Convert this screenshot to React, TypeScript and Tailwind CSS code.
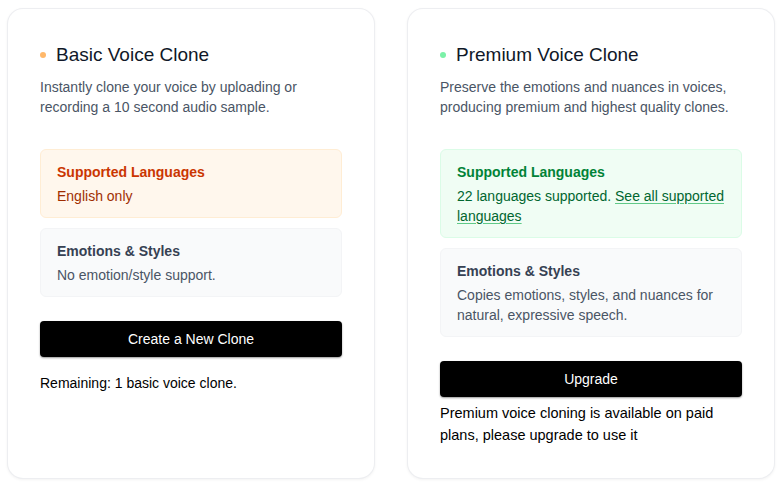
type InfoBox = {
  title: string;
  body: React.ReactNode;
  tone: "orange" | "green" | "gray";
};

type CloneCard = {
  title: string;
  dot: string;
  description: string;
  boxes: InfoBox[];
  action: string;
  footnote: string;
  footClass: string;
};

const TONE: Record<InfoBox["tone"], { box: string; title: string; body: string }> = {
  orange: {
    box: "bg-orange-50 border-orange-100",
    title: "text-orange-700",
    body: "text-orange-800",
  },
  green: {
    box: "bg-green-50 border-green-100",
    title: "text-green-700",
    body: "text-green-800",
  },
  gray: {
    box: "bg-gray-50 border-gray-100",
    title: "text-gray-700",
    body: "text-gray-600",
  },
};

const CARDS: CloneCard[] = [
  {
    title: "Basic Voice Clone",
    dot: "bg-orange-300",
    description: "Instantly clone your voice by uploading or recording a 10 second audio sample.",
    boxes: [
      { title: "Supported Languages", body: "English only", tone: "orange" },
      { title: "Emotions & Styles", body: "No emotion/style support.", tone: "gray" },
    ],
    action: "Create a New Clone",
    footnote: "Remaining: 1 basic voice clone.",
    footClass: "mt-4 text-sm leading-5",
  },
  {
    title: "Premium Voice Clone",
    dot: "bg-green-300",
    description: "Preserve the emotions and nuances in voices, producing premium and highest quality clones.",
    boxes: [
      {
        title: "Supported Languages",
        body: (
          <>
            22 languages supported.{" "}
            <a href="#" className="underline decoration-green-600/60 underline-offset-2">
              See all supported languages
            </a>
          </>
        ),
        tone: "green",
      },
      {
        title: "Emotions & Styles",
        body: "Copies emotions, styles, and nuances for natural, expressive speech.",
        tone: "gray",
      },
    ],
    action: "Upgrade",
    footnote: "Premium voice cloning is available on paid plans, please upgrade to use it",
    footClass: "mt-[5px] text-[14.5px] leading-[22px]",
  },
];

export default function App() {
  return (
    <div className="grid grid-cols-2 gap-8 pt-2 pb-2 pl-[7px] pr-[6px] bg-white font-['Liberation_Sans',Arial,sans-serif]">
      {CARDS.map((card) => (
        <section
          key={card.title}
          className="rounded-2xl border border-gray-200/70 bg-white p-8 shadow-[0_1px_3px_rgba(0,0,0,0.05)]"
        >
          <div className="flex items-center gap-2.5">
            <span className={`h-1.5 w-1.5 rounded-full ${card.dot}`} />
            <h2 className="text-[19px] leading-7 text-gray-900">{card.title}</h2>
          </div>
          <p className="mt-2 text-sm leading-5 text-gray-600">{card.description}</p>

          <div className="mt-8 flex flex-col gap-2.5">
            {card.boxes.map((box) => (
              <div key={box.title} className={`rounded-md border px-4 pt-3 pb-[11px] ${TONE[box.tone].box}`}>
                <p className={`text-sm leading-5 font-bold ${TONE[box.tone].title}`}>{box.title}</p>
                <p className={`mt-1 text-sm leading-5 ${TONE[box.tone].body}`}>{box.body}</p>
              </div>
            ))}
          </div>

          <button className="mt-6 h-9 w-full rounded-[4px] bg-black text-sm text-white shadow-[0_1px_2px_rgba(0,0,0,0.4)]">
            {card.action}
          </button>
          <p className={`${card.footClass} text-black`}>{card.footnote}</p>
        </section>
      ))}
    </div>
  );
}
